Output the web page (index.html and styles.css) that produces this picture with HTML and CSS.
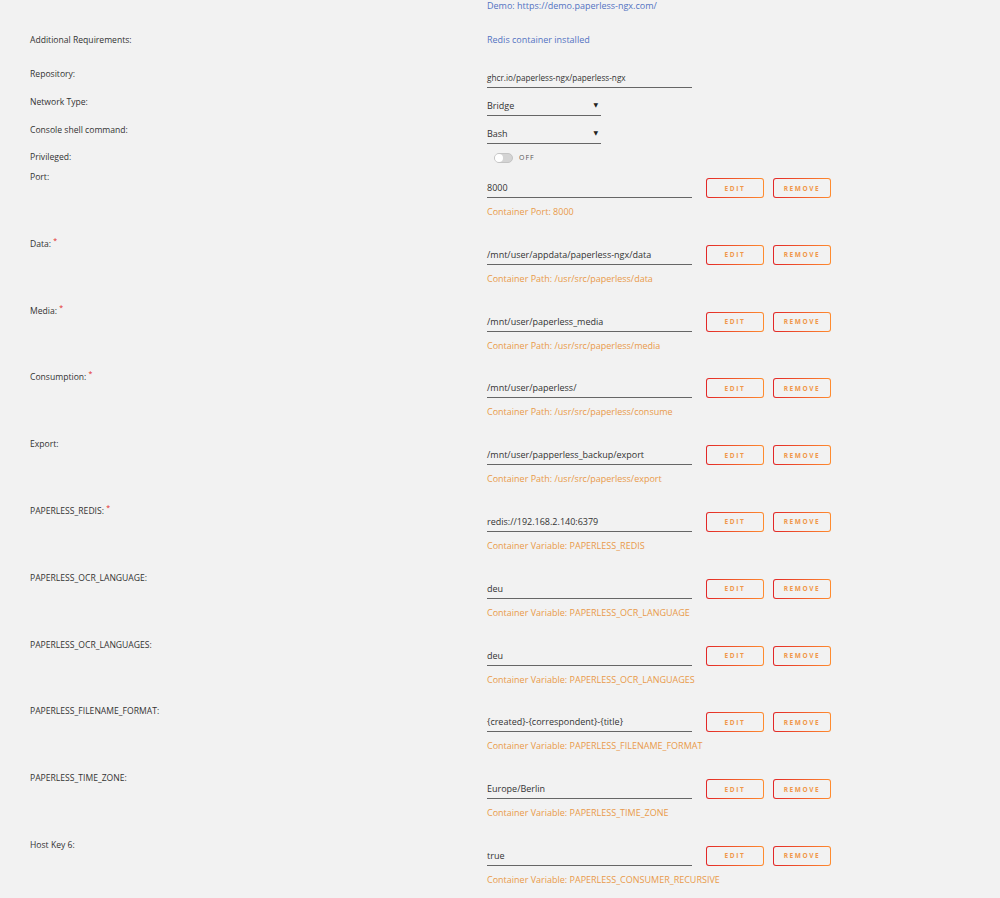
FILE: index.html
```html
<!DOCTYPE html>
<html>
<head>
<meta charset="utf-8">
<title>Update Container</title>
<link rel="stylesheet" href="styles.css">
</head>
<body>
<div class="form">
  <div class="row r-demo">
    <div class="label"></div>
    <div class="value"><a class="link" href="#">Demo: https://demo.paperless-ngx.com/</a></div>
  </div>
  <div class="row r-info">
    <div class="label">Additional Requirements:</div>
    <div class="value"><a class="link" href="#">Redis container installed</a></div>
  </div>
  <div class="row r-input">
    <div class="label">Repository:</div>
    <div class="value"><div class="field wide repo">ghcr.io/paperless-ngx/paperless-ngx</div></div>
  </div>
  <div class="row r-input">
    <div class="label">Network Type:</div>
    <div class="value"><div class="field select">Bridge<span class="arrow">&#9660;</span></div></div>
  </div>
  <div class="row r-input r-tight">
    <div class="label">Console shell command:</div>
    <div class="value"><div class="field select">Bash<span class="arrow">&#9660;</span></div></div>
  </div>
  <div class="row r-switch">
    <div class="label">Privileged:</div>
    <div class="value"><span class="switch"><span class="knob"></span></span><span class="switch-text">OFF</span></div>
  </div>

  <div class="row cfg">
    <div class="label">Port:</div>
    <div class="value">
      <div class="line"><div class="field wide">8000</div><button class="btn">EDIT</button><button class="btn">REMOVE</button></div>
      <div class="note">Container Port: 8000</div>
    </div>
  </div>
  <div class="row cfg">
    <div class="label">Data: <span class="req">*</span></div>
    <div class="value">
      <div class="line"><div class="field wide">/mnt/user/appdata/paperless-ngx/data</div><button class="btn">EDIT</button><button class="btn">REMOVE</button></div>
      <div class="note">Container Path: /usr/src/paperless/data</div>
    </div>
  </div>
  <div class="row cfg">
    <div class="label">Media: <span class="req">*</span></div>
    <div class="value">
      <div class="line"><div class="field wide">/mnt/user/paperless_media</div><button class="btn">EDIT</button><button class="btn">REMOVE</button></div>
      <div class="note">Container Path: /usr/src/paperless/media</div>
    </div>
  </div>
  <div class="row cfg">
    <div class="label">Consumption: <span class="req">*</span></div>
    <div class="value">
      <div class="line"><div class="field wide">/mnt/user/paperless/</div><button class="btn">EDIT</button><button class="btn">REMOVE</button></div>
      <div class="note">Container Path: /usr/src/paperless/consume</div>
    </div>
  </div>
  <div class="row cfg">
    <div class="label">Export:</div>
    <div class="value">
      <div class="line"><div class="field wide">/mnt/user/papperless_backup/export</div><button class="btn">EDIT</button><button class="btn">REMOVE</button></div>
      <div class="note">Container Path: /usr/src/paperless/export</div>
    </div>
  </div>
  <div class="row cfg">
    <div class="label">PAPERLESS_REDIS: <span class="req">*</span></div>
    <div class="value">
      <div class="line"><div class="field wide">redis://192.168.2.140:6379</div><button class="btn">EDIT</button><button class="btn">REMOVE</button></div>
      <div class="note">Container Variable: PAPERLESS_REDIS</div>
    </div>
  </div>
  <div class="row cfg">
    <div class="label">PAPERLESS_OCR_LANGUAGE:</div>
    <div class="value">
      <div class="line"><div class="field wide">deu</div><button class="btn">EDIT</button><button class="btn">REMOVE</button></div>
      <div class="note">Container Variable: PAPERLESS_OCR_LANGUAGE</div>
    </div>
  </div>
  <div class="row cfg">
    <div class="label">PAPERLESS_OCR_LANGUAGES:</div>
    <div class="value">
      <div class="line"><div class="field wide">deu</div><button class="btn">EDIT</button><button class="btn">REMOVE</button></div>
      <div class="note">Container Variable: PAPERLESS_OCR_LANGUAGES</div>
    </div>
  </div>
  <div class="row cfg">
    <div class="label">PAPERLESS_FILENAME_FORMAT:</div>
    <div class="value">
      <div class="line"><div class="field wide">{created}-{correspondent}-{title}</div><button class="btn">EDIT</button><button class="btn">REMOVE</button></div>
      <div class="note">Container Variable: PAPERLESS_FILENAME_FORMAT</div>
    </div>
  </div>
  <div class="row cfg">
    <div class="label">PAPERLESS_TIME_ZONE:</div>
    <div class="value">
      <div class="line"><div class="field wide">Europe/Berlin</div><button class="btn">EDIT</button><button class="btn">REMOVE</button></div>
      <div class="note">Container Variable: PAPERLESS_TIME_ZONE</div>
    </div>
  </div>
  <div class="row cfg">
    <div class="label">Host Key 6:</div>
    <div class="value">
      <div class="line"><div class="field wide">true</div><button class="btn">EDIT</button><button class="btn">REMOVE</button></div>
      <div class="note">Container Variable: PAPERLESS_CONSUMER_RECURSIVE</div>
    </div>
  </div>
</div>
</body>
</html>
```

FILE: styles.css
```css
body{margin:0;background:#f2f2f2;font-family:"Open Sans","DejaVu Sans",sans-serif;font-size:9px;color:#333;}
.form{padding:0 0 0 30px;margin-top:-1px;}
.row{display:flex;}
.label{width:457px;flex:none;line-height:14px;font-size:8.6px;}
.value{line-height:14px;}
.req{color:#e22828;font-size:7px;vertical-align:top;line-height:8px;}
.link{color:#5272c2;text-decoration:none;}

.r-demo{height:34px;}
.r-info{height:34px;}
.r-input{height:28px;}
.r-input .value{padding-top:1px;}
.r-tight{height:27px;}
.r-switch{height:20px;}

.field{height:19px;line-height:19px;border-bottom:1px solid #666;color:#333;box-sizing:content-box;}
.field.wide{width:205px;}
.field.repo{font-size:8.2px;}
.field.select{width:114px;position:relative;}
.arrow{position:absolute;right:3px;top:0;font-size:6px;color:#222;}

.switch{display:inline-block;vertical-align:middle;width:17px;height:8px;border:1px solid #c4c4c4;border-radius:5px;background:#d4d4d4;margin:0 6px 0 7px;position:relative;}
.knob{position:absolute;left:0;top:0;width:8px;height:8px;border-radius:4px;background:#fff;}
.switch-text{font-size:7px;letter-spacing:1px;color:#555;vertical-align:middle;}

.cfg{padding-bottom:17.8px;}
.cfg .value{padding-top:8px;}
.line{display:flex;align-items:flex-start;}
.btn{height:20px;width:58px;margin-left:14px;padding:0;font-family:inherit;font-size:6.5px;font-weight:bold;letter-spacing:1.6px;color:#f0974a;border:1px solid transparent;border-radius:3px;
  background:linear-gradient(#f2f2f2,#f2f2f2) padding-box,linear-gradient(90deg,#e22828,#ff8c2f) border-box;cursor:pointer;}
.btn + .btn{margin-left:9px;}
.note{margin-top:7px;color:#e99a4a;}
```
